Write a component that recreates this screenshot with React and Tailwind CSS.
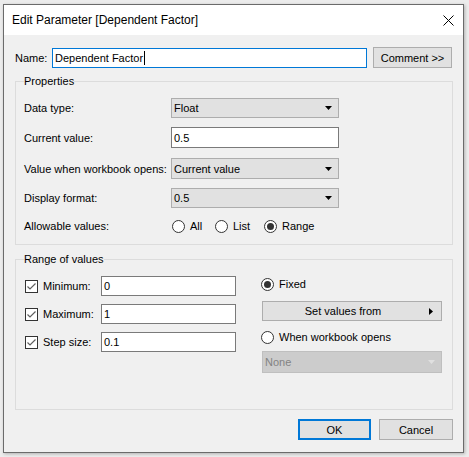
import React from "react";

const DownArrow = ({ color = "#000" }) => (
  <svg width="7" height="4" viewBox="0 0 7 4" className="shrink-0">
    <polygon points="0,0 7,0 3.5,4" fill={color} />
  </svg>
);

const Select = ({ value, disabled, className = "" }) => (
  <div
    className={`flex items-center justify-between pl-[2px] pr-[6px] border ${
      disabled
        ? "bg-[#cccccc] border-[#bfbfbf] text-[#838383]"
        : "bg-[#e1e1e1] border-[#adadad] text-black"
    } ${className}`}
  >
    <span>{value}</span>
    <DownArrow color={disabled ? "#e0e0e0" : "#000"} />
  </div>
);

const TextBox = ({ value, className = "" }) => (
  <div
    className={`flex items-center pl-[2px] bg-white border border-[#7a7a7a] ${className}`}
  >
    {value}
  </div>
);

const Radio = ({ checked, label, className = "" }) => (
  <div className={`flex items-center gap-[5px] ${className}`}>
    <span className="w-[13px] h-[13px] rounded-full border border-[#333] bg-white flex items-center justify-center shrink-0">
      {checked && <span className="w-[7px] h-[7px] rounded-full bg-[#333]" />}
    </span>
    <span>{label}</span>
  </div>
);

const Checkbox = () => (
  <span className="w-[13px] h-[13px] border border-[#333] bg-white flex items-center justify-center shrink-0">
    <svg width="11" height="11" viewBox="0 0 11 11">
      <polyline
        points="1.5,5.5 4,8 9.5,2.5"
        fill="none"
        stroke="#5f5f5f"
        strokeWidth="1.2"
      />
    </svg>
  </span>
);

const Button = ({ children, primary, className = "" }) => (
  <div
    className={`flex items-center justify-center bg-[#e1e1e1] ${
      primary ? "border-2 border-[#0078d7]" : "border border-[#adadad]"
    } ${className}`}
  >
    {children}
  </div>
);

const PropRow = ({ label, children, className = "" }) => (
  <div className={`flex items-center ${className}`}>
    <span className="w-[147px] shrink-0 whitespace-nowrap">{label}</span>
    {children}
  </div>
);

const RangeRow = ({ label, value, className = "" }) => (
  <div className={`flex items-center h-[20px] ${className}`}>
    <Checkbox />
    <span className="ml-[5px] w-[58px] whitespace-nowrap">{label}</span>
    <TextBox value={value} className="w-[135px] h-[20px]" />
  </div>
);

export default function App() {
  return (
    <div className="w-[469px] h-[457px] bg-[#ececec] pl-[3px] pt-[4px] font-['Liberation_Sans',Arial,sans-serif] text-[11px] leading-[16px] text-black">
      <div className="w-[461px] h-[449px] border border-[#6b6b6b] bg-[#f0f0f0] flex flex-col shadow-[1px_1px_3px_rgba(0,0,0,0.25)]">
        {/* title bar */}
        <div className="h-[30px] bg-white flex items-center justify-between pl-[8px] pr-[9px] shrink-0">
          <span className="text-[12px]">Edit Parameter [Dependent Factor]</span>
          <svg width="11" height="11" viewBox="0 0 11 11">
            <path d="M0.5 0.5 L10.5 10.5 M10.5 0.5 L0.5 10.5" stroke="#000" strokeWidth="1" />
          </svg>
        </div>

        <div className="flex-1 flex flex-col pl-[11px] pr-[10px]">
          {/* name */}
          <div className="flex items-center mt-[12px] h-[21px]">
            <span className="w-[37px]">Name:</span>
            <div className="w-[315px] h-[20px] bg-white border border-[#0078d7] flex items-center pl-[2px]">
              Dependent Factor
              <span className="w-px h-[14px] bg-black ml-[1px]" />
            </div>
            <Button className="ml-[6px] w-[79px] h-[21px]">Comment &gt;&gt;</Button>
          </div>

          {/* properties */}
          <fieldset className="mt-[5px] border border-[#dcdcdc] pl-[8px] pb-[11px]">
            <legend className="leading-[16px]">Properties</legend>
            <PropRow label="Data type:" className="h-[20px] mt-[9px]">
              <Select value="Float" className="w-[168px] h-[20px]" />
            </PropRow>
            <PropRow label="Current value:" className="h-[21px] mt-[9px]">
              <TextBox value="0.5" className="w-[168px] h-[21px]" />
            </PropRow>
            <PropRow label="Value when workbook opens:" className="h-[21px] mt-[10px]">
              <Select value="Current value" className="w-[168px] h-[21px]" />
            </PropRow>
            <PropRow label="Display format:" className="h-[20px] mt-[9px]">
              <Select value="0.5" className="w-[168px] h-[20px]" />
            </PropRow>
            <PropRow label="Allowable values:" className="h-[14px] mt-[11px]">
              <div className="flex items-center ml-[1px]">
                <Radio label="All" className="w-[43px]" />
                <Radio label="List" className="w-[49px]" />
                <Radio checked label="Range" />
              </div>
            </PropRow>
          </fieldset>

          {/* range of values */}
          <fieldset className="mt-[6px] border border-[#dcdcdc] pl-[8px] pb-[36px]">
            <legend className="leading-[16px]">Range of values</legend>
            <div className="flex">
              <div className="flex flex-col pt-[9px] ml-[1px] w-[236px]">
                <RangeRow label="Minimum:" value="0" />
                <RangeRow label="Maximum:" value="1" className="mt-[8px]" />
                <RangeRow label="Step size:" value="0.1" className="mt-[8px]" />
              </div>
              <div className="flex flex-col">
                <div className="h-[14px] mt-[10px] flex items-center">
                  <Radio checked label="Fixed" />
                </div>
                <div className="mt-[10px] ml-[1px] w-[180px] h-[20px] flex items-center bg-[#e1e1e1] border border-[#adadad]">
                  <span className="flex-1 text-center pl-[2px]">Set values from</span>
                  <svg width="20" height="7" viewBox="0 0 20 7" className="shrink-0">
                    <polygon points="8,0 12,3.5 8,7" fill="#000" />
                  </svg>
                </div>
                <div className="h-[14px] mt-[9px] flex items-center">
                  <Radio label="When workbook opens" />
                </div>
                <Select disabled value="None" className="mt-[7px] ml-[1px] w-[180px] h-[22px]" />
              </div>
            </div>
          </fieldset>

          {/* buttons */}
          <div className="flex justify-end gap-[8px] mt-[9px]">
            <Button primary className="w-[73px] h-[21px]">OK</Button>
            <Button className="w-[74px] h-[21px]">Cancel</Button>
          </div>
        </div>
      </div>
    </div>
  );
}
